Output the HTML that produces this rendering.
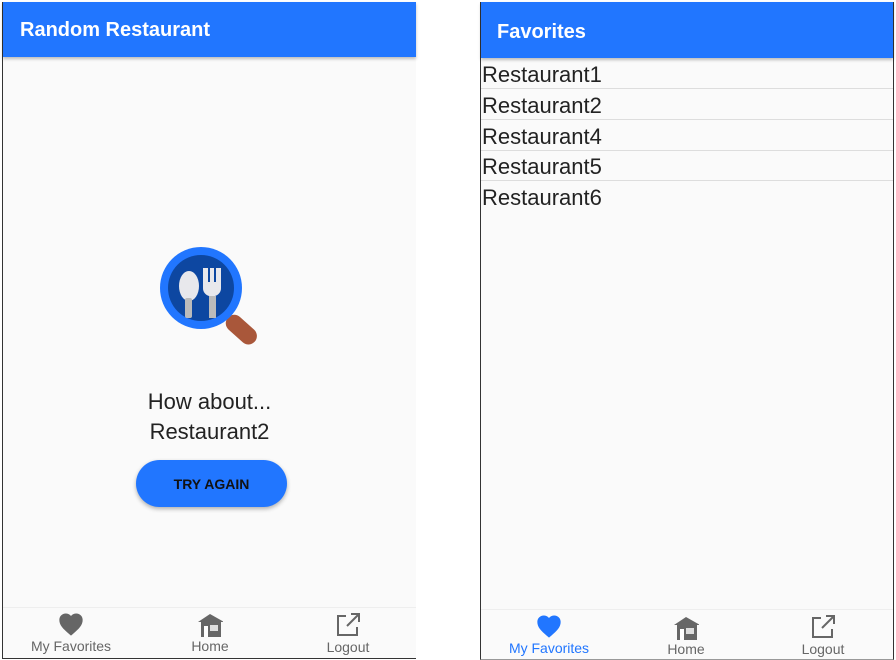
<!DOCTYPE html>
<html><head><meta charset="utf-8"><style>
*{margin:0;padding:0;box-sizing:border-box}
body{width:896px;height:660px;background:#fff;position:relative;overflow:hidden;font-family:"Liberation Sans",sans-serif}
.p{position:absolute;background:#fafafa}
.hd{position:absolute;left:0;right:0;top:0;background:#2176ff;color:#fff;font-size:20px;font-weight:bold;box-shadow:0 2px 3px rgba(0,0,0,.25)}
.nav{position:absolute;left:0;right:0;bottom:0;height:52px;border-top:1px solid #eee;background:#fafafa}
.it{position:absolute;top:0;width:120px;text-align:center;font-size:14px;color:#666}
.it svg{display:block;margin:0 auto}
.row{position:absolute;left:0;right:0;height:31px;border-bottom:1px solid #ddd;font-size:22px;color:#222;line-height:34px;padding-left:1px}
</style></head><body>
<!-- left -->
<div class="p" style="left:2px;top:2px;width:414px;height:657px;border-left:1.5px solid #333;border-bottom:1.5px solid #333">
 <div class="hd" style="height:55px;line-height:56px;padding-left:17px">Random Restaurant</div>
 <svg style="position:absolute;left:156px;top:244px" width="104" height="104" viewBox="0 0 104 104">
  <line x1="64" y1="64" x2="80" y2="78" stroke="#555" stroke-width="3"/>
  <rect x="74" y="66" width="17" height="36" rx="8.5" fill="#a9573a" transform="rotate(-48 82 84)"/>
  <circle cx="42" cy="42" r="41" fill="#2176ff"/>
  <circle cx="42" cy="42" r="33" fill="#0d47a1"/>
  <ellipse cx="30" cy="40" rx="10" ry="15" fill="#e8e8ec"/>
  <rect x="26" y="52" width="7" height="20" rx="2" fill="#bbb"/>
  <path d="M44 22 h5 v14 h2 v-14 h4 v14 h2 v-14 h5 v20 a8 8 0 0 1 -6 8 v22 h-6 v-22 a8 8 0 0 1 -6 -8z" fill="#e8e8ec"/>
  <rect x="50" y="50" width="7" height="22" fill="#bbb"/>
 </svg>
 <div style="position:absolute;left:0;right:0;top:385px;text-align:center;font-size:22px;color:#222;line-height:30px">How about...<br>Restaurant2</div>
 <div style="position:absolute;left:133px;top:458px;width:151px;height:47px;border-radius:24px;background:#2176ff;box-shadow:0 2px 4px rgba(0,0,0,.3);text-align:center;line-height:48px;font-size:14px;font-weight:bold;color:#111">TRY AGAIN</div>
 <div class="nav" style="height:51px">
  <div class="it" style="left:8px"><svg width="28" height="26" viewBox="0 0 24 22" style="margin-top:3px"><path d="M12 21l-1.5-1.3C5 15 2 12 2 7.5 2 4.4 4.4 2 7.5 2c1.7 0 3.4.8 4.5 2.1C13.1 2.8 14.8 2 16.5 2 19.6 2 22 4.4 22 7.5c0 4.5-3 7.5-8.5 12.2z" fill="#666"/></svg><div style="margin-top:1px">My Favorites</div></div>
  <div class="it" style="left:147px"><svg width="26" height="26" viewBox="0 0 26 26" style="margin-top:4px"><path d="M13 2L1 10h3v15h20V10h3z" fill="#666"/><rect x="7" y="14" width="4" height="11" fill="#fff"/><rect x="13" y="13" width="8" height="6" fill="#ddd"/></svg><div>Home</div></div>
  <div class="it" style="left:285px"><svg width="26" height="26" viewBox="0 0 26 26" style="margin-top:4px"><path d="M11 4H3v19h19v-8" fill="none" stroke="#666" stroke-width="2"/><path d="M12 14L24 2M16 2h8v8" fill="none" stroke="#666" stroke-width="2"/></svg><div style="margin-top:1px">Logout</div></div>
 </div>
</div>
<!-- right -->
<div class="p" style="left:480px;top:2px;width:414px;height:658px;border-left:1.5px solid #333;border-right:1.5px solid #333;border-bottom:1.5px solid #999">
 <div class="hd" style="height:56px;line-height:60px;padding-left:16px">Favorites</div>
 <div class="row" style="top:56px">Restaurant1</div>
 <div class="row" style="top:87px">Restaurant2</div>
 <div class="row" style="top:118px">Restaurant4</div>
 <div class="row" style="top:148px">Restaurant5</div>
 <div class="row" style="top:179px;border-bottom:none">Restaurant6</div>
 <div class="nav" style="height:50px">
  <div class="it" style="left:8px;color:#2176ff"><svg width="28" height="26" viewBox="0 0 24 22" style="margin-top:3px"><path d="M12 21l-1.5-1.3C5 15 2 12 2 7.5 2 4.4 4.4 2 7.5 2c1.7 0 3.4.8 4.5 2.1C13.1 2.8 14.8 2 16.5 2 19.6 2 22 4.4 22 7.5c0 4.5-3 7.5-8.5 12.2z" fill="#2176ff"/></svg><div style="margin-top:1px">My Favorites</div></div>
  <div class="it" style="left:145px"><svg width="26" height="26" viewBox="0 0 26 26" style="margin-top:5px"><path d="M13 2L1 10h3v15h20V10h3z" fill="#666"/><rect x="7" y="14" width="4" height="11" fill="#fff"/><rect x="13" y="13" width="8" height="6" fill="#ddd"/></svg><div>Home</div></div>
  <div class="it" style="left:282px"><svg width="26" height="26" viewBox="0 0 26 26" style="margin-top:4px"><path d="M11 4H3v19h19v-8" fill="none" stroke="#666" stroke-width="2"/><path d="M12 14L24 2M16 2h8v8" fill="none" stroke="#666" stroke-width="2"/></svg><div style="margin-top:1px">Logout</div></div>
 </div>
</div>
</body></html>
